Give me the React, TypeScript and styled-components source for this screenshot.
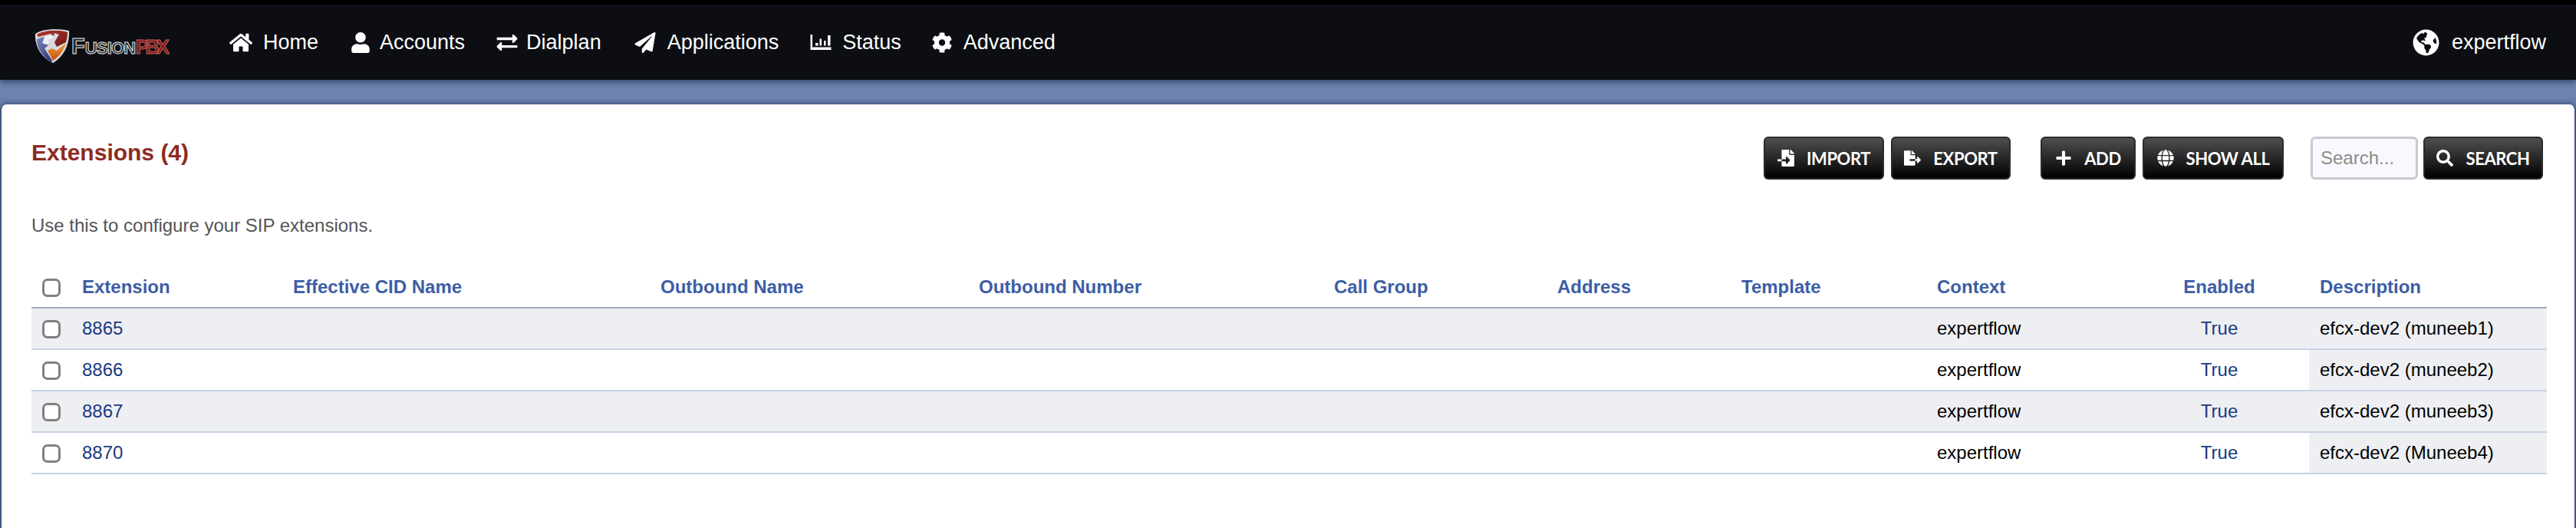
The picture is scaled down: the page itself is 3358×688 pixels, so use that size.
import React from 'react';
import styled, { createGlobalStyle } from 'styled-components';
import {
  FaHome,
  FaUser,
  FaExchangeAlt,
  FaPaperPlane,
  FaCog,
  FaGlobeAmericas,
  FaFileImport,
  FaFileExport,
  FaPlus,
  FaGlobe,
  FaSearch,
} from 'react-icons/fa';

const GlobalStyle = createGlobalStyle`
  html, body {
    margin: 0;
    padding: 0;
    background: #6c84ae;
  }
  body {
    height: 688px;
    overflow: hidden;
    font-family: 'Liberation Sans', Arial, sans-serif;
  }
`;

const menu = [
  { label: 'Home', icon: <FaHome />, gap: 40, iconGap: 14 },
  { label: 'Accounts', icon: <FaUser />, gap: 40, iconGap: 10 },
  { label: 'Dialplan', icon: <FaExchangeAlt />, gap: 42, iconGap: 10 },
  { label: 'Applications', icon: <FaPaperPlane />, gap: 40, iconGap: 14 },
  { label: 'Status', icon: <ChartIcon />, gap: 38, iconGap: 13 },
  { label: 'Advanced', icon: <FaCog />, gap: 0, iconGap: 13 },
];

const columns = [52, 275, 479, 415, 463, 291, 240, 255, 265, 234, 310];

const headers = [
  'Extension',
  'Effective CID Name',
  'Outbound Name',
  'Outbound Number',
  'Call Group',
  'Address',
  'Template',
  'Context',
  'Enabled',
  'Description',
];

const rows = [
  { ext: '8865', desc: 'efcx-dev2 (muneeb1)' },
  { ext: '8866', desc: 'efcx-dev2 (muneeb2)' },
  { ext: '8867', desc: 'efcx-dev2 (muneeb3)' },
  { ext: '8870', desc: 'efcx-dev2 (Muneeb4)' },
];

function ChartIcon() {
  return (
    <svg viewBox="-1.5 -3 30 27" fill="currentColor">
      <path d="M0 0h2.5v16.5H27V20H0z" />
      <path d="M6.5 11H10v3.5H6.5zM12 5.5h2.5v9H12zM17.5 8H20v6.5h-2.5zM22.5 1H26v13.5h-3.5z" />
    </svg>
  );
}

const Logo = () => (
  <LogoWrapper>
    <svg width="48" height="46" viewBox="0 0 48 46">
      <defs>
        <linearGradient id="shieldRed" x1="0" y1="0" x2="1" y2="1">
          <stop offset="0" stopColor="#b03a30" />
          <stop offset="1" stopColor="#6e1512" />
        </linearGradient>
        <linearGradient id="shieldBlue" x1="0" y1="0" x2="1" y2="1">
          <stop offset="0" stopColor="#7d88c0" />
          <stop offset="1" stopColor="#23306f" />
        </linearGradient>
        <linearGradient id="shieldOrange" x1="0" y1="0" x2="0" y2="1">
          <stop offset="0" stopColor="#f0a030" />
          <stop offset="1" stopColor="#c2501a" />
        </linearGradient>
      </defs>
      <path d="M2 7C10 1 30-1 46 3c1 17-6 33-21 42C10 38 1 24 2 7z" fill="#d8d8dc" />
      <path d="M4 8C12 3 30 1 44 5c0 5-1 9-2 13L30 24l-3-6 6-10-6-2-1 4-4-3-16 4z" fill="url(#shieldRed)" />
      <path d="M4 14l10-3-3 8 8 3-5 4 10 16-1 2C11 36 4 26 4 14z" fill="url(#shieldBlue)" />
      <path d="M42 19c-3 10-9 18-17 23l-7-13 6-3 6 3z" fill="url(#shieldOrange)" />
      <path d="M14 11l8-2 5 2-4 3-5 1 3 3-5 3-4-2z" fill="#eef0f4" />
    </svg>
    <LogoText>
      F<small>USION</small>
      <LogoAccent>PBX</LogoAccent>
    </LogoText>
  </LogoWrapper>
);

const App = () => (
  <>
    <GlobalStyle />
    <TopBar>
      <Logo />
      <Menu>
        {menu.map((item) => (
          <MenuItem key={item.label} $gap={item.gap}>
            <MenuIcon $gap={item.iconGap}>{item.icon}</MenuIcon>
            {item.label}
          </MenuItem>
        ))}
      </Menu>
      <Domain>
        <FaGlobeAmericas />
        expertflow
      </Domain>
    </TopBar>
    <Panel>
      <PanelHead>
        <Title>Extensions (4)</Title>
        <Actions>
          <Button $width={157}>
            <FaFileImport />
            IMPORT
          </Button>
          <Button $width={156} $after={30}>
            <FaFileExport />
            EXPORT
          </Button>
          <Button $width={124}>
            <FaPlus />
            ADD
          </Button>
          <Button $width={184} $after={26}>
            <FaGlobe />
            SHOW ALL
          </Button>
          <SearchInput placeholder="Search..." />
          <Button $width={156}>
            <FaSearch />
            SEARCH
          </Button>
        </Actions>
      </PanelHead>
      <Intro>Use this to configure your SIP extensions.</Intro>
      <Table>
        <colgroup>
          {columns.map((width, index) => (
            <col key={index} style={{ width }} />
          ))}
        </colgroup>
        <thead>
          <tr>
            <HeadCell>
              <Check type="checkbox" />
            </HeadCell>
            {headers.map((title) => (
              <HeadCell key={title} $center={title === 'Enabled'}>
                {title}
              </HeadCell>
            ))}
          </tr>
        </thead>
        <tbody>
          {rows.map((row, index) => (
            <tr key={row.ext}>
              <Cell $shade={index % 2 === 0}>
                <Check type="checkbox" />
              </Cell>
              <Cell $shade={index % 2 === 0} $link>
                {row.ext}
              </Cell>
              {[0, 1, 2, 3, 4, 5].map((blank) => (
                <Cell key={blank} $shade={index % 2 === 0} />
              ))}
              <Cell $shade={index % 2 === 0}>expertflow</Cell>
              <Cell $shade={index % 2 === 0} $link $center>
                True
              </Cell>
              <Cell $shade>{row.desc}</Cell>
            </tr>
          ))}
        </tbody>
      </Table>
    </Panel>
  </>
);

export default App;

const TopBar = styled.header`
  position: relative;
  display: flex;
  align-items: center;
  height: 98px;
  border-top: 6px solid #000;
  background: #0c0e13;
  padding: 0 39px 0 44px;
  box-shadow: 0 3px 8px rgba(20, 30, 60, 0.6);
  color: #fff;
`;

const LogoWrapper = styled.div`
  display: flex;
  align-items: center;
  width: 255px;
  flex: none;
  margin-top: 10px;
`;

const LogoText = styled.span`
  font-family: 'Liberation Sans', sans-serif;
  font-size: 29px;
  line-height: 1;
  font-weight: 700;
  color: #23252b;
  -webkit-text-stroke: 1px #e4e4e8;
  margin-left: 1px;

  small {
    font-size: 22px;
    letter-spacing: -0.8px;
  }
`;

const LogoAccent = styled.span`
  color: #7d1a17;
  font-size: 26px;
  letter-spacing: -4.5px;
  -webkit-text-stroke: 1px #c2605a;
`;

const Menu = styled.nav`
  display: flex;
  align-items: center;
`;

const MenuItem = styled.div<{ $gap: number }>`
  display: flex;
  align-items: center;
  margin-right: ${(p) => p.$gap}px;
  font-size: 27px;
  white-space: nowrap;
`;

const MenuIcon = styled.span<{ $gap: number }>`
  display: flex;
  margin-right: ${(p) => p.$gap}px;

  svg {
    width: 30px;
    height: 27px;
  }
`;

const Domain = styled.div`
  display: flex;
  align-items: center;
  gap: 16px;
  margin-left: auto;
  font-size: 27px;

  svg {
    width: 35px;
    height: 35px;
  }
`;

const Panel = styled.main`
  margin: 32px 0 0;
  height: 552px;
  box-sizing: border-box;
  background: #fff;
  border-left: 2px solid #3f5580;
  border-right: 2px solid #3f5580;
  border-radius: 8px 8px 0 0;
  padding: 42px 36px 0 39px;
  box-shadow: 0 -2px 6px rgba(30, 45, 85, 0.55);
`;

const PanelHead = styled.div`
  display: flex;
  justify-content: space-between;
  align-items: flex-start;
`;

const Title = styled.h1`
  margin: 0;
  padding-top: 3px;
  font-size: 30px;
  line-height: 36px;
  font-weight: 700;
  color: #8e2a24;
`;

const Actions = styled.div`
  display: flex;
  align-items: center;
  gap: 9px;
  margin-right: 5px;
`;

const Button = styled.button<{ $width: number; $after?: number }>`
  display: flex;
  align-items: center;
  justify-content: center;
  gap: 16px;
  box-sizing: border-box;
  width: ${(p) => p.$width}px;
  height: 56px;
  margin-right: ${(p) => p.$after ?? 0}px;
  padding: 0;
  border: 2px solid #2b2b2b;
  border-radius: 6px;
  background: linear-gradient(#4f4f4f, #000);
  color: #fff;
  font-family: 'Lato', sans-serif;
  font-size: 22px;
  font-weight: 700;
  letter-spacing: -0.4px;
  white-space: nowrap;

  svg {
    width: 22px;
    height: 22px;
    flex: none;
  }
`;

const SearchInput = styled.input`
  box-sizing: border-box;
  width: 140px;
  height: 56px;
  margin-right: -2px;
  padding: 0 10px;
  border: 3px solid #c9cad0;
  border-radius: 6px;
  background: #f8f9fe;
  font-family: 'Liberation Sans', sans-serif;
  font-size: 24px;

  &::placeholder {
    color: #8b8b8b;
  }
`;

const Intro = styled.p`
  margin: 46px 0 0;
  font-size: 24px;
  line-height: 28px;
  color: #555;
`;

const Table = styled.table`
  margin-top: 39px;
  width: 3279px;
  table-layout: fixed;
  border-collapse: collapse;
`;

const HeadCell = styled.th<{ $center?: boolean }>`
  height: 54px;
  padding: 0 14px;
  box-sizing: border-box;
  border-bottom: 2px solid #a3abbf;
  text-align: ${(p) => (p.$center ? 'center' : 'left')};
  font-size: 24px;
  font-weight: 700;
  color: #3c5ea5;
  white-space: nowrap;
`;

const Cell = styled.td<{ $shade?: boolean; $link?: boolean; $center?: boolean }>`
  height: 54px;
  padding: 0 14px;
  box-sizing: border-box;
  border-bottom: 2px solid #c8d2e6;
  background: ${(p) => (p.$shade ? '#eeeff3' : '#fff')};
  text-align: ${(p) => (p.$center ? 'center' : 'left')};
  font-size: 24px;
  color: ${(p) => (p.$link ? '#1a3a80' : '#000')};
  white-space: nowrap;
`;

const Check = styled.input`
  appearance: none;
  display: block;
  box-sizing: border-box;
  width: 24px;
  height: 24px;
  margin: 2px 0 0;
  border: 3px solid #808080;
  border-radius: 7px;
  background: #fff;
`;
